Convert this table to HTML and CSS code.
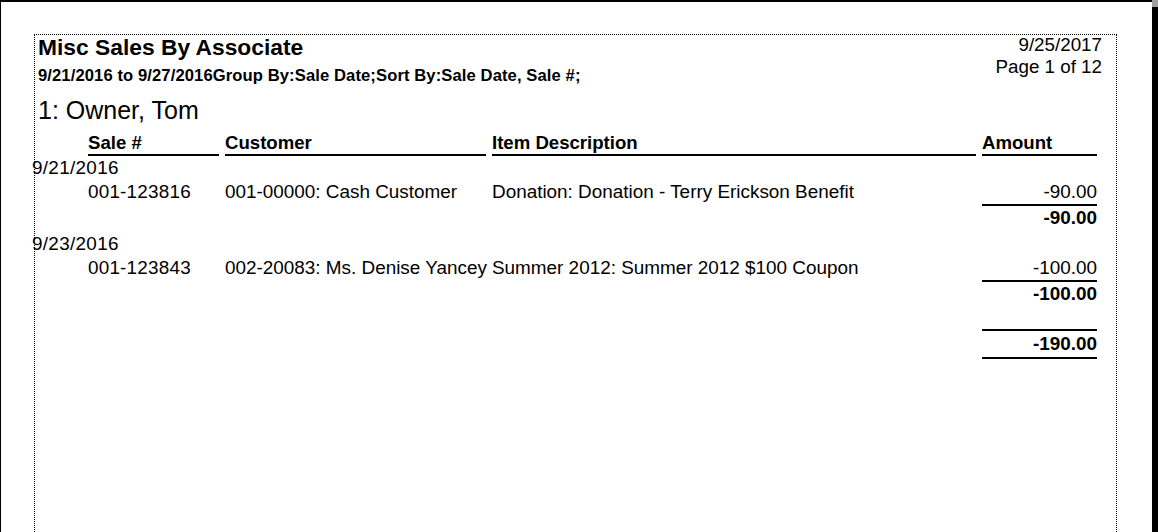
FILE: index.html
```html
<!DOCTYPE html>
<html>
<head>
<meta charset="utf-8">
<link rel="stylesheet" href="styles.css">
</head>
<body>
<div class="screen">
  <div class="frame">
    <div class="report">
      <div class="report-head">
        <div class="titles">
          <div class="title">Misc Sales By Associate</div>
          <div class="subtitle">9/21/2016 to 9/27/2016Group By:Sale Date;Sort By:Sale Date, Sale #;</div>
        </div>
        <div class="meta">
          <div>9/25/2017</div>
          <div>Page 1 of 12</div>
        </div>
      </div>
      <div class="owner">1: Owner, Tom</div>
      <div class="row col-heads">
        <div class="col-h">Sale #</div>
        <div class="col-h">Customer</div>
        <div class="col-h">Item Description</div>
        <div class="col-h">Amount</div>
      </div>

      <div class="date">9/21/2016</div>
      <div class="row line">
        <div>001-123816</div>
        <div>001-00000: Cash Customer</div>
        <div>Donation: Donation - Terry Erickson Benefit</div>
        <div class="amt ruled">-90.00</div>
      </div>
      <div class="row subtotal">
        <div class="amt c4">-90.00</div>
      </div>

      <div class="date">9/23/2016</div>
      <div class="row line">
        <div>001-123843</div>
        <div>002-20083: Ms. Denise Yancey</div>
        <div>Summer 2012: Summer 2012 $100 Coupon</div>
        <div class="amt ruled">-100.00</div>
      </div>
      <div class="row subtotal">
        <div class="amt c4">-100.00</div>
      </div>

      <div class="row grand">
        <div class="amt c4 boxed">-190.00</div>
      </div>
    </div>
  </div>
  <div class="bar"><div class="thumb"></div></div>
</div>
</body>
</html>
```

FILE: styles.css
```css
html, body {
  margin: 0;
  padding: 0;
  background: #fff;
  overflow: hidden;
}

body {
  font-family: "Liberation Sans", Arial, sans-serif;
  color: #000;
}

.screen {
  display: flex;
  width: 1158px;
  height: 532px;
  overflow: hidden;
}

.frame {
  flex: 1;
  border-top: 2px solid #000;
  border-left: 1px solid #000;
  background: #fff;
  overflow: hidden;
}

.bar {
  width: 6px;
  background: #000;
}

.thumb {
  height: 7px;
  background: #a0a0a0;
}

.report {
  margin: 32px 0 0 33px;
  width: 1083px;
  height: 600px;
  box-sizing: border-box;
  border: 1px dotted #000;
}

.report-head {
  display: flex;
  justify-content: space-between;
  align-items: flex-start;
  padding: 0 14px 0 3px;
}

.title {
  font-size: 22.8px;
  line-height: 25px;
  font-weight: bold;
}

.subtitle {
  margin-top: 6px;
  font-size: 16.6px;
  letter-spacing: 0.1px;
  line-height: 20px;
  font-weight: bold;
  white-space: nowrap;
}

.meta {
  margin-top: -1px;
  font-size: 18.8px;
  line-height: 21.5px;
  text-align: right;
}

.owner {
  margin-top: 10px;
  padding-left: 3px;
  font-size: 25px;
  line-height: 29px;
}

.row {
  display: grid;
  grid-template-columns: 131px 261px 484px 115px;
  column-gap: 6px;
  padding-left: 53px;
  font-size: 18.9px;
  line-height: 24px;
  white-space: nowrap;
}

.col-heads {
  margin-top: 7px;
  font-weight: bold;
  font-size: 18.6px;
  line-height: 22px;
}

.col-h {
  border-bottom: 2px solid #000;
}

.date {
  margin-left: -3px;
  font-size: 18.9px;
  letter-spacing: 0.3px;
  line-height: 24px;
}

.line > div:first-child {
  letter-spacing: 0.2px;
}

.amt {
  text-align: right;
}

.c4 {
  grid-column: 4;
}

.ruled {
  border-bottom: 2px solid #000;
}

.subtotal {
  font-weight: bold;
}

.subtotal + .date {
  margin-top: 2px;
}

.grand {
  margin-top: 23px;
  font-weight: bold;
}

.boxed {
  border-top: 2px solid #000;
  border-bottom: 2px solid #000;
  line-height: 26px;
}
```
